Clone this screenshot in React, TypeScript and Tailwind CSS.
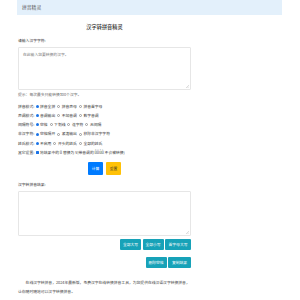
import React from 'react';

const options: { label: string; items: string[] }[] = [
  { label: '拼音模式:', items: ['拼音全拼', '拼音声母', '拼音首字母'] },
  { label: '声调模式:', items: ['音调输出', '不加音调', '数字音调'] },
  { label: '间隔符号:', items: ['空格', '下划线', '连字符', '无间隔'] },
  { label: '非汉字符:', items: ['空格隔开', '紧凑输出', '移除非汉字字符'] },
  { label: '姓氏模式:', items: ['不启用', '开头的姓氏', '全部的姓氏'] },
];

const Radio = ({ on }: { on: boolean }) =>
  on ? (
    <span className="inline-block w-[3px] h-[3px] rounded-full bg-[#1a73e8] mr-[1.5px]" />
  ) : (
    <span className="inline-block w-[3px] h-[3px] rounded-full border-[0.5px] border-[#999] mr-[1.5px]" />
  );

const Grip = () => (
  <svg className="absolute right-[1px] bottom-[1px]" width="3" height="3" viewBox="0 0 3 3">
    <path d="M3 0L0 3M3 1.5L1.5 3" stroke="#aaa" strokeWidth="0.4" />
  </svg>
);

const App: React.FC = () => {
  return (
    <div className="w-[300px] h-[300px] bg-white overflow-hidden text-[#333] text-[3.8px]" style={{ fontFamily: '"Noto Sans CJK SC", "Noto Sans", sans-serif' }}>
      {/* header */}
      <div className="ml-[17px] w-[265px] h-[15px] bg-[#e3f0fb] flex items-center pl-[5px]">
        <span className="text-[4.8px] text-[#555] leading-none">拼音精灵</span>
      </div>

      <div className="ml-[18px] w-[173px]">
        <div className="mt-[9px] h-[6px] leading-[6px] text-center text-[5.2px] font-medium text-[#333]">汉字转拼音精灵</div>

        <div className="mt-[8px] leading-[5px] h-[5px]">请输入汉字字符:</div>
        <div className="relative mt-[4px] h-[43px] border border-[#e6e6e6] rounded-[1px] px-[4px] pt-[4px] text-[#777]">
          在此输入您要转换的汉字。
          <Grip />
        </div>
        <div className="mt-[2px] leading-[5px] h-[5px] text-[#666]">提示：每次最多只能转换300个汉字。</div>

        <div className="mt-[5px]">
          {options.map((o) => (
            <div key={o.label} className="h-[9.2px] flex items-center">
              <span className="w-[17px] mr-[0.5px]">{o.label}</span>
              {o.items.map((it, i) => (
                <span key={it} className="flex items-center mr-[2px]">
                  <Radio on={i === 0} />
                  {it}
                </span>
              ))}
            </div>
          ))}
          <div className="h-[9.2px] flex items-center">
            <span className="w-[17px] mr-[0.5px]">其它设置:</span>
            <span className="inline-block w-[3px] h-[3px] rounded-[0.5px] bg-[#1a73e8] mr-[1.5px]" />
            将结果中的 ü 替换为 v(带音调的 ǖǘǚǜ 不会被转换)
          </div>
        </div>

        <div className="mt-[5px] flex justify-center gap-[3px]">
          <button className="w-[15px] h-[13px] bg-[#007bff] text-white rounded-[1px] leading-none">计算</button>
          <button className="w-[15px] h-[13px] bg-[#ffc107] text-[#212529] rounded-[1px] leading-none">重置</button>
        </div>

        <div className="mt-[7px] leading-[5px] h-[5px]">汉字转拼音结果:</div>
        <div className="relative mt-[4px] h-[45px] border border-[#e6e6e6] rounded-[1px]">
          <Grip />
        </div>

        <div className="mt-[3px] flex justify-end gap-[1.5px]">
          <button className="w-[21px] h-[11px] bg-[#17a2b8] text-white rounded-[1px] leading-none">全部大写</button>
          <button className="w-[21px] h-[11px] bg-[#17a2b8] text-white rounded-[1px] leading-none">全部小写</button>
          <button className="w-[26px] h-[11px] bg-[#17a2b8] text-white rounded-[1px] leading-none">首字母大写</button>
        </div>
        <div className="mt-[7px] flex justify-end gap-[1.5px]">
          <button className="w-[21px] h-[11px] bg-[#17a2b8] text-white rounded-[1px] leading-none">删除空格</button>
          <button className="w-[23px] h-[11px] bg-[#17a2b8] text-white rounded-[1px] leading-none">复制结果</button>
        </div>

        <p className="mt-[10px] leading-[9px] indent-[7.6px] text-[#444]">
          在线汉字转拼音，2024年最新版，免费汉字在线转换拼音工具，为您提供在线汉语汉字转换拼音，让你随时随地可以汉字转换拼音。
        </p>
      </div>
    </div>
  );
};

export default App;
